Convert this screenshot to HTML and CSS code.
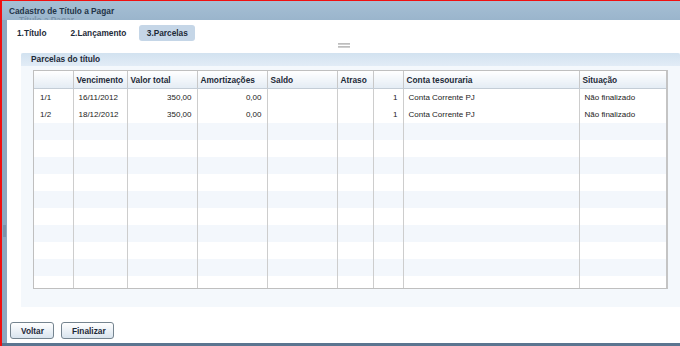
FILE: index.html
```html
<!DOCTYPE html>
<html lang="pt-BR">
<head>
    <meta charset="UTF-8">
    <meta name="viewport" content="width=device-width, initial-scale=1.0">
    <title>Cadastro de Título a Pagar</title>
    <link rel="stylesheet" href="styles.css">
</head>
<body>
    <div class="frame">
        <div class="titlebar">
            <div class="title">Cadastro de Título a Pagar</div>
            <div class="subtitle">Título a Pagar</div>
        </div>
        <div class="main">
            <div class="sidestrip"><div class="handle"></div></div>
            <div class="panel">
                <div class="tabs">
                    <div class="tab">1.Título</div>
                    <div class="tab">2.Lançamento</div>
                    <div class="tab active">3.Parcelas</div>
                </div>
                <div class="grabber"><span></span><span></span></div>
                <div class="fieldset">
                    <div class="legend">Parcelas do título</div>
                    <div class="grid">
                        <table>
                            <colgroup>
                                <col style="width:39px"><col style="width:54px"><col style="width:70px">
                                <col style="width:70px"><col style="width:70px"><col style="width:36px">
                                <col style="width:30px"><col style="width:176px"><col style="width:89px">
                            </colgroup>
                            <thead>
                                <tr>
                                    <th></th><th>Vencimento</th><th>Valor total</th><th>Amortizações</th>
                                    <th>Saldo</th><th>Atraso</th><th></th><th>Conta tesouraria</th><th>Situação</th>
                                </tr>
                            </thead>
                            <tbody>
                                <tr>
                                    <td>1/1</td><td>16/11/2012</td><td class="num">350,00</td><td class="num">0,00</td>
                                    <td></td><td></td><td class="num">1</td><td>Conta Corrente PJ</td><td>Não finalizado</td>
                                </tr>
                                <tr>
                                    <td>1/2</td><td>18/12/2012</td><td class="num">350,00</td><td class="num">0,00</td>
                                    <td></td><td></td><td class="num">1</td><td>Conta Corrente PJ</td><td>Não finalizado</td>
                                </tr>
                                <tr class="alt"><td></td><td></td><td></td><td></td><td></td><td></td><td></td><td></td><td></td></tr>
                                <tr><td></td><td></td><td></td><td></td><td></td><td></td><td></td><td></td><td></td></tr>
                                <tr class="alt"><td></td><td></td><td></td><td></td><td></td><td></td><td></td><td></td><td></td></tr>
                                <tr><td></td><td></td><td></td><td></td><td></td><td></td><td></td><td></td><td></td></tr>
                                <tr class="alt"><td></td><td></td><td></td><td></td><td></td><td></td><td></td><td></td><td></td></tr>
                                <tr><td></td><td></td><td></td><td></td><td></td><td></td><td></td><td></td><td></td></tr>
                                <tr class="alt"><td></td><td></td><td></td><td></td><td></td><td></td><td></td><td></td><td></td></tr>
                                <tr><td></td><td></td><td></td><td></td><td></td><td></td><td></td><td></td><td></td></tr>
                                <tr class="alt"><td></td><td></td><td></td><td></td><td></td><td></td><td></td><td></td><td></td></tr>
                                <tr><td></td><td></td><td></td><td></td><td></td><td></td><td></td><td></td><td></td></tr>
                            </tbody>
                        </table>
                    </div>
                </div>
                <div class="buttons">
                    <button>Voltar</button>
                    <button>Finalizar</button>
                </div>
            </div>
        </div>
        <div class="bottombar"></div>
    </div>
</body>
</html>
```

FILE: styles.css
```css
html, body {
    margin: 0;
    padding: 0;
    height: 100%;
    overflow: hidden;
}
body {
    font-family: "Liberation Sans", Arial, sans-serif;
    font-size: 8px;
    color: #222;
    background: #9fb9d0;
}
.frame {
    height: 346px;
    border-left: 2px solid #f01010;
    border-top: 1px solid #f01010;
    box-sizing: border-box;
    display: flex;
    flex-direction: column;
    background: #9db8cf;
}
.titlebar {
    height: 19px;
    overflow: hidden;
    background: linear-gradient(#a6bfd4, #9ab5cc);
    padding-left: 7px;
}
.title {
    font-weight: bold;
    font-size: 8.3px;
    color: #233447;
    padding-top: 5px;
    line-height: 10px;
}
/* half hidden under the panel, as in the original window */
.subtitle {
    font-weight: bold;
    font-size: 8.3px;
    color: #7d95ab;
    padding-left: 10px;
    line-height: 8px;
}
.main {
    flex: 1;
    display: flex;
}
.sidestrip {
    width: 5px;
    background: #8ea8c0;
    display: flex;
    align-items: center;
}
.handle {
    width: 3px;
    height: 12px;
    margin-left: 1px;
    margin-top: 98px;
    background: #7b93aa;
}
.panel {
    flex: 1;
    background: #fff;
    display: flex;
    flex-direction: column;
}
.tabs {
    display: flex;
    padding: 5px 0 0 5px;
    height: 16px;
}
.tab {
    font-weight: bold;
    font-size: 8.3px;
    line-height: 16px;
    padding: 0 5px;
    margin-right: 14px;
    color: #1d2a38;
}
.tab:nth-child(2) {
    margin-right: 8px;
}
.tab.active {
    background: #c5d6e7;
    border-radius: 3px;
    width: 56px;
    padding: 0;
    text-align: center;
}
.grabber {
    display: flex;
    flex-direction: column;
    align-items: center;
    gap: 1px;
    padding-top: 2px;
    height: 10px;
    box-sizing: border-box;
}
.grabber span {
    display: block;
    width: 12px;
    height: 2px;
    background: linear-gradient(#b4b4b4, #d8d8d8);
}
.fieldset {
    margin-left: 14px;
    margin-top: 2px;
    height: 254px;
    background: #f4f8fc;
    display: flex;
    flex-direction: column;
}
.legend {
    height: 13px;
    line-height: 13px;
    background: linear-gradient(#d2e2f0, #e2ecf6);
    border-radius: 2px 2px 0 0;
    font-weight: bold;
    font-size: 8.3px;
    padding-left: 10px;
    color: #1d2a38;
}
.grid {
    margin: 4px 0 0 12px;
    width: 635px;
    height: 219px;
    overflow: hidden;
    border: 1px solid #bfbfbf;
    border-right: 2px solid #c4c4c4;
    box-sizing: border-box;
    background: #fff;
}
table {
    border-collapse: collapse;
    table-layout: fixed;
    width: 634px;
}
th {
    height: 17px;
    background: linear-gradient(#ffffff, #e4ecf4);
    border-bottom: 1px solid #c4cdd6;
    border-right: 1px solid #c8c8c8;
    font-weight: bold;
    font-size: 8.3px;
    text-align: left;
    padding: 0 3px;
    color: #1d2a38;
}
td {
    height: 17px;
    padding: 0 5px;
    border-right: 1px solid #cdcdcd;
    white-space: nowrap;
    overflow: hidden;
    color: #222;
}
th:first-child, td:first-child {
    padding-left: 6px;
}
td.num {
    text-align: right;
}
tr.alt td {
    background: #f3f7fc;
}
.buttons {
    display: flex;
    gap: 7px;
    margin: 15px 0 0 3px;
}
.buttons button {
    font-family: "Liberation Sans", Arial, sans-serif;
    font-weight: bold;
    font-size: 8.3px;
    color: #1d2a38;
    height: 17px;
    padding: 0 10px;
    border: 1px solid #75848f;
    border-radius: 3px;
    background: linear-gradient(#ffffff, #d9e4ee);
    cursor: pointer;
}
.buttons button:first-child {
    width: 44px;
}
.buttons button:last-child {
    width: 53px;
}
.bottombar {
    height: 3px;
    background: #5b7590;
}
```
